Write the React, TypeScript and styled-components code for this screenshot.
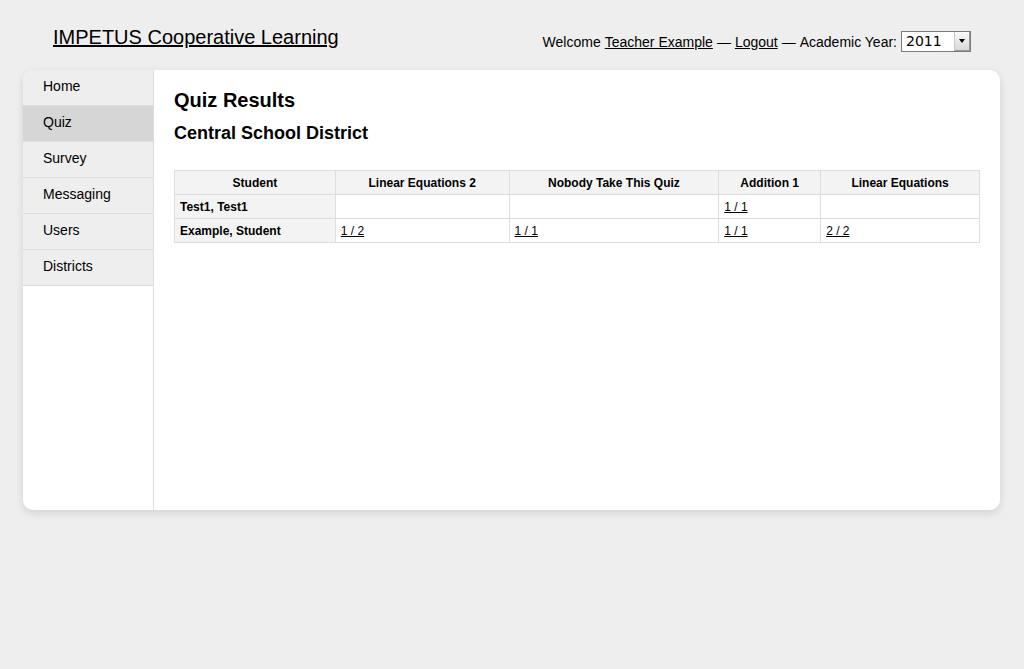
import React from "react";
import styled, { createGlobalStyle } from "styled-components";

const Global = createGlobalStyle`
  html, body { margin: 0; padding: 0; background: #eeeeee; }
  body { font-family: "Liberation Sans", Arial, Helvetica, sans-serif; color: #000; }
  a { color: #000; }
`;

const Page = styled.div`
  width: 1024px;
  height: 669px;
  background: #eeeeee;
`;

const Header = styled.header`
  display: flex;
  justify-content: space-between;
  align-items: flex-start;
  padding: 25px 53px 0 53px;
  height: 70px;
  box-sizing: border-box;
`;

const Title = styled.a`
  font-size: 20px;
  line-height: 24px;
  color: #000;
  text-decoration: underline;
`;

const UserBar = styled.div`
  display: flex;
  align-items: center;
  gap: 4px;
  font-size: 14px;
  margin-top: 6px;
`;

const UserLink = styled.a`
  color: #000;
  text-decoration: underline;
`;

const FakeSelect = styled.div`
  display: flex;
  align-items: stretch;
  width: 70px;
  height: 21px;
  box-sizing: border-box;
  border: 1px solid #7a7a7a;
  background: #fff;
`;

const SelectValue = styled.span`
  flex: 1;
  font-family: "DejaVu Sans", Verdana, sans-serif;
  font-size: 14px;
  line-height: 19px;
  padding-left: 4px;
`;

const SelectArrow = styled.span`
  width: 14px;
  border-left: 1px solid #c8c8c8;
  background: linear-gradient(#fafafa, #d8d8d8);
  border-right: 1px solid #9a9a9a;
  border-bottom: 1px solid #9a9a9a;
  display: flex;
  align-items: center;
  justify-content: center;
  &::after {
    content: "";
    border-left: 3px solid transparent;
    border-right: 3px solid transparent;
    border-top: 4px solid #000;
  }
`;

const Card = styled.div`
  margin: 0 24px 0 23px;
  height: 440px;
  background: #fff;
  border-radius: 10px;
  box-shadow: 0 3px 8px rgba(0, 0, 0, 0.12);
  display: flex;
  overflow: hidden;
`;

const Sidebar = styled.nav`
  width: 130px;
  border-right: 1px solid #dddddd;
  display: flex;
  flex-direction: column;
`;

const NavItem = styled.a<{ $active?: boolean }>`
  display: block;
  height: 35px;
  line-height: 33px;
  padding-left: 20px;
  font-size: 14px;
  color: #000;
  text-decoration: none;
  background: ${(p) => (p.$active ? "#d6d6d6" : "#eeeeee")};
  border-bottom: 1px solid #dddddd;
`;

const Content = styled.main`
  flex: 1;
  padding: 18px 20px 20px 20px;
`;

const H1 = styled.h1`
  font-size: 20px;
  font-weight: bold;
  margin: 0 0 11px 0;
  line-height: 24px;
`;

const H2 = styled.h2`
  font-size: 18px;
  font-weight: bold;
  margin: 0 0 26px 0;
  line-height: 21px;
`;

const Table = styled.table`
  width: 100%;
  border-collapse: collapse;
  font-size: 12px;
`;

const Th = styled.th`
  background: #f3f3f3;
  border: 1px solid #dddddd;
  height: 23px;
  padding: 0 6px;
  font-weight: bold;
  text-align: center;
`;

const RowHead = styled.th`
  background: #f3f3f3;
  border: 1px solid #dddddd;
  height: 23px;
  padding: 0 5px;
  font-weight: bold;
  text-align: left;
`;

const Td = styled.td`
  border: 1px solid #dddddd;
  height: 23px;
  padding: 0 5px;
  font-size: 12px;
`;

const ScoreLink = styled.a`
  color: #000;
  text-decoration: underline;
`;

const nav = ["Home", "Quiz", "Survey", "Messaging", "Users", "Districts"];
const quizzes = ["Linear Equations 2", "Nobody Take This Quiz", "Addition 1", "Linear Equations"];
const widths = [161, 174, 210, 102, 159];
const rows: { name: string; scores: (string | null)[] }[] = [
  { name: "Test1, Test1", scores: [null, null, "1 / 1", null] },
  { name: "Example, Student", scores: ["1 / 2", "1 / 1", "1 / 1", "2 / 2"] },
];

export default function App() {
  return (
    <Page>
      <Global />
      <Header>
        <Title href="#">IMPETUS Cooperative Learning</Title>
        <UserBar>
          <span>Welcome</span>
          <UserLink href="#">Teacher Example</UserLink>
          <span>—</span>
          <UserLink href="#">Logout</UserLink>
          <span>—</span>
          <span>Academic Year:</span>
          <FakeSelect>
            <SelectValue>2011</SelectValue>
            <SelectArrow />
          </FakeSelect>
        </UserBar>
      </Header>
      <Card>
        <Sidebar>
          {nav.map((n) => (
            <NavItem key={n} href="#" $active={n === "Quiz"}>
              {n}
            </NavItem>
          ))}
        </Sidebar>
        <Content>
          <H1>Quiz Results</H1>
          <H2>Central School District</H2>
          <Table>
            <colgroup>
              {widths.map((w, i) => (
                <col key={i} style={{ width: w }} />
              ))}
            </colgroup>
            <thead>
              <tr>
                <Th>Student</Th>
                {quizzes.map((q) => (
                  <Th key={q}>{q}</Th>
                ))}
              </tr>
            </thead>
            <tbody>
              {rows.map((r) => (
                <tr key={r.name}>
                  <RowHead>{r.name}</RowHead>
                  {r.scores.map((s, i) => (
                    <Td key={i}>{s ? <ScoreLink href="#">{s}</ScoreLink> : null}</Td>
                  ))}
                </tr>
              ))}
            </tbody>
          </Table>
        </Content>
      </Card>
    </Page>
  );
}
